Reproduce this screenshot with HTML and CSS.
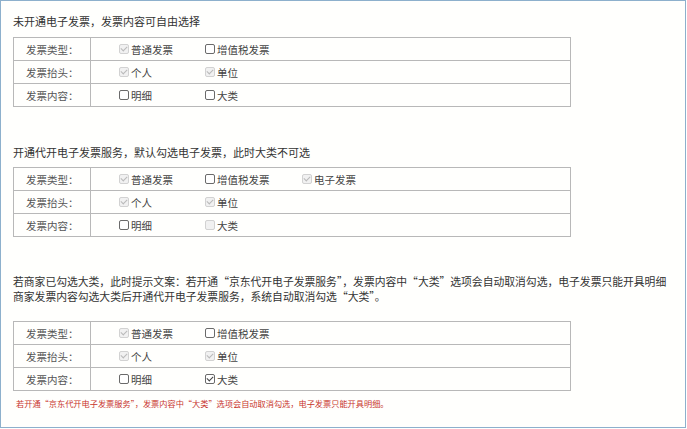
FILE: index.html
```html
<!DOCTYPE html>
<html lang="zh-CN">
<head>
  <meta charset="UTF-8" />
  <meta name="viewport" content="width=device-width, initial-scale=1.0" />
  <title>发票设置说明</title>
  <link rel="stylesheet" href="styles.css">
</head>
<body>
  <div class="frame">

    <!-- 场景一：未开通电子发票 -->
    <h2 class="note">未开通电子发票，发票内容可自由选择</h2>
    <table class="invoice">
      <tr>
        <td class="label">发票类型：</td>
        <td>
          <div class="opts">
            <span class="opt"><span class="box checked off"></span>普通发票</span>
            <span class="opt"><span class="box"></span>增值税发票</span>
          </div>
        </td>
      </tr>
      <tr>
        <td class="label">发票抬头：</td>
        <td>
          <div class="opts">
            <span class="opt"><span class="box checked off"></span>个人</span>
            <span class="opt"><span class="box checked off"></span>单位</span>
          </div>
        </td>
      </tr>
      <tr>
        <td class="label">发票内容：</td>
        <td>
          <div class="opts">
            <span class="opt"><span class="box"></span>明细</span>
            <span class="opt"><span class="box"></span>大类</span>
          </div>
        </td>
      </tr>
    </table>

    <!-- 场景二：开通代开电子发票服务 -->
    <h2 class="note second">开通代开电子发票服务，默认勾选电子发票，此时大类不可选</h2>
    <table class="invoice">
      <tr>
        <td class="label">发票类型：</td>
        <td>
          <div class="opts">
            <span class="opt"><span class="box checked off"></span>普通发票</span>
            <span class="opt"><span class="box"></span>增值税发票</span>
            <span class="opt"><span class="box checked off"></span>电子发票</span>
          </div>
        </td>
      </tr>
      <tr>
        <td class="label">发票抬头：</td>
        <td>
          <div class="opts">
            <span class="opt"><span class="box checked off"></span>个人</span>
            <span class="opt"><span class="box checked off"></span>单位</span>
          </div>
        </td>
      </tr>
      <tr>
        <td class="label">发票内容：</td>
        <td>
          <div class="opts">
            <span class="opt"><span class="box"></span>明细</span>
            <span class="opt"><span class="box off"></span>大类</span>
          </div>
        </td>
      </tr>
    </table>

    <!-- 场景三：已勾选大类时的提示 -->
    <p class="desc">若商家已勾选大类，此时提示文案：若开通“京东代开电子发票服务”，发票内容中“大类”选项会自动取消勾选，电子发票只能开具明细<br>商家发票内容勾选大类后开通代开电子发票服务，系统自动取消勾选“大类”。</p>
    <table class="invoice">
      <tr>
        <td class="label">发票类型：</td>
        <td>
          <div class="opts">
            <span class="opt"><span class="box checked off"></span>普通发票</span>
            <span class="opt"><span class="box"></span>增值税发票</span>
          </div>
        </td>
      </tr>
      <tr>
        <td class="label">发票抬头：</td>
        <td>
          <div class="opts">
            <span class="opt"><span class="box checked off"></span>个人</span>
            <span class="opt"><span class="box checked off"></span>单位</span>
          </div>
        </td>
      </tr>
      <tr>
        <td class="label">发票内容：</td>
        <td>
          <div class="opts">
            <span class="opt"><span class="box"></span>明细</span>
            <span class="opt"><span class="box checked"></span>大类</span>
          </div>
        </td>
      </tr>
    </table>
    <p class="warn">若开通“京东代开电子发票服务”，发票内容中“大类”选项会自动取消勾选，电子发票只能开具明细。</p>

  </div>
</body>
</html>
```

FILE: styles.css
```css
/* Page frame */
body {
  margin: 0;
  background: #fff;
  font-family: "Noto Sans CJK SC", "Noto Sans", sans-serif;
  color: #333;
}
.frame {
  box-sizing: border-box;
  width: 686px;
  height: 428px;
  border: 1px solid #8db0cc;
  background: #fffffd;
  padding: 12px 0 0 12px;
}
/* Section titles */
.note {
  margin: 0 0 8px;
  font-size: 11px;
  font-weight: normal;
  line-height: 16px;
  color: #333;
}
.note.second {
  margin-top: 37px;
  margin-bottom: 7px;
}
.desc {
  margin: 37px 0 17px;
  font-size: 10.8px;
  line-height: 15px;
  color: #333;
}
/* Invoice option table */
.invoice {
  width: 558px;
  border-collapse: collapse;
  border: 1px solid #9c9c9c;
  font-size: 10.5px;
  color: #444;
}
.invoice td {
  height: 22px;
  padding: 0;
  border: 1px solid #b8b8b8;
}
.invoice .label {
  width: 64px;
  padding-left: 12px;
  color: #555;
}
.opts {
  display: grid;
  grid-template-columns: 86px 97px auto;
  padding-left: 28px;
}
.opt {
  display: flex;
  align-items: center;
  gap: 2px;
}
/* Checkboxes */
.box {
  position: relative;
  box-sizing: border-box;
  width: 10px;
  height: 10px;
  border: 1px solid #6a6a6a;
  border-radius: 2px;
  background: #fff;
}
.box.off {
  border-color: #d2d2d2;
  background: #f1f1f1;
}
.box.checked::after {
  content: "";
  position: absolute;
  left: 2px;
  top: 0;
  width: 3px;
  height: 5px;
  border: solid #444;
  border-width: 0 1.2px 1.2px 0;
  transform: rotate(45deg);
}
.box.checked.off::after {
  border-color: #b9b9b9;
}
/* Red warning below last table */
.warn {
  margin: 6px 0 0 3px;
  font-size: 8.2px;
  line-height: 12px;
  color: #c8352d;
}
```
